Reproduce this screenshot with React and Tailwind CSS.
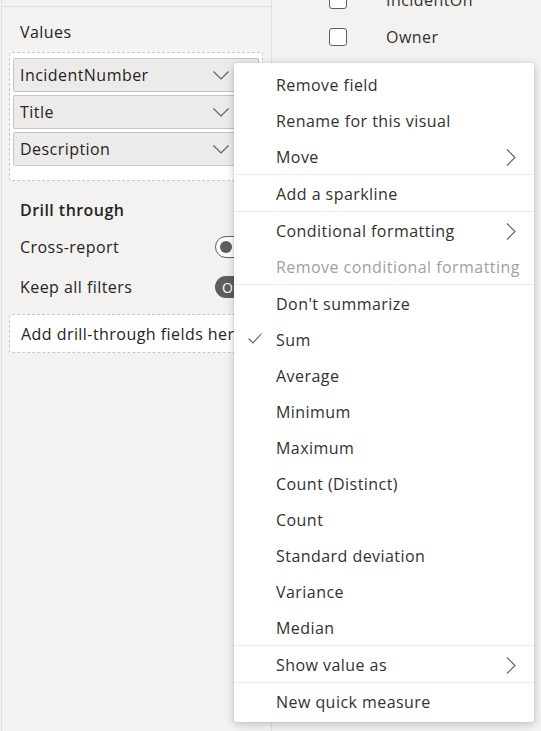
import { Fragment } from 'react'

const font = { fontFamily: '"Open Sans", "Noto Sans", sans-serif' }

const menuGroups = [
  [
    { label: 'Remove field' },
    { label: 'Rename for this visual' },
    { label: 'Move', sub: true },
  ],
  [{ label: 'Add a sparkline' }],
  [
    { label: 'Conditional formatting', sub: true },
    { label: 'Remove conditional formatting', disabled: true },
  ],
  [
    { label: "Don't summarize" },
    { label: 'Sum', checked: true },
    { label: 'Average' },
    { label: 'Minimum' },
    { label: 'Maximum' },
    { label: 'Count (Distinct)' },
    { label: 'Count' },
    { label: 'Standard deviation' },
    { label: 'Variance' },
    { label: 'Median' },
  ],
  [{ label: 'Show value as', sub: true }],
  [{ label: 'New quick measure' }],
]

function ChevronDown() {
  return (
    <svg width="16" height="9" viewBox="0 0 16 9" fill="none">
      <path d="M0.5 0.5 L8 8 L15.5 0.5" stroke="#605e5c" strokeWidth="1.1" />
    </svg>
  )
}

function ChevronRight() {
  return (
    <svg width="10" height="17" viewBox="0 0 10 17" fill="none">
      <path d="M1 0.5 L9 8.5 L1 16.5" stroke="#605e5c" strokeWidth="1.1" />
    </svg>
  )
}

function Check() {
  return (
    <svg width="14" height="11" viewBox="0 0 14 11" fill="none">
      <path d="M0.5 5.5 L5 10 L13.5 0.5" stroke="#605e5c" strokeWidth="1.1" />
    </svg>
  )
}

function FieldPill({ name }) {
  return (
    <div className="flex h-[34px] items-center justify-between rounded-[2px] border border-[#c8c6c4] bg-[#edebe9] pl-[6px] pr-[29px] text-[16px] text-[#252423]">
      <span>{name}</span>
      <ChevronDown />
    </div>
  )
}

function ContextMenu() {
  return (
    <div className="absolute left-[234px] top-[63px] w-[300px] rounded-[3px] bg-white py-[3px] shadow-[0_2px_8px_rgba(0,0,0,0.22),0_0_2px_rgba(0,0,0,0.12)]">
      {menuGroups.map((group, gi) => (
        <Fragment key={gi}>
          {gi > 0 && <div className="h-px bg-[#edebe9]" />}
          {group.map((item) => (
            <div
              key={item.label}
              className={`relative flex h-[36px] items-center pl-[42px] pr-[18px] pt-[2px] text-[16px] ${
                item.disabled ? 'text-[#a19f9d]' : 'text-[#323130]'
              }`}
            >
              {item.checked && (
                <span className="absolute left-[14px] top-[12px]">
                  <Check />
                </span>
              )}
              <span className="flex-1 whitespace-nowrap">{item.label}</span>
              {item.sub && <ChevronRight />}
            </div>
          ))}
        </Fragment>
      ))}
    </div>
  )
}

export default function App() {
  return (
    <div style={font} className="relative flex h-[731px] w-[541px] overflow-hidden bg-[#f3f2f1] tracking-[0.45px]">
      {/* fields pane */}
      <div className="ml-px flex w-[271px] flex-col border-l border-r border-[#e1dfdd]">
        <div className="h-[7px] border-b border-[#e1dfdd]" />
        <div className="pl-[18px] pt-[14px] text-[16px] leading-[22px] text-[#252423]">Values</div>
        <div className="ml-[7px] mr-[8px] mt-[9px] flex flex-col gap-[3px] rounded-[3px] border border-dashed border-[#c8c6c4] bg-white px-[3px] pb-[14px] pt-[5px]">
          <FieldPill name="IncidentNumber" />
          <FieldPill name="Title" />
          <FieldPill name="Description" />
        </div>

        <div className="pl-[18px] pt-[18px] text-[16px] font-semibold leading-[22px] text-[#252423]">Drill through</div>
        <div className="mt-[15px] flex h-[22px] items-center justify-between pl-[18px] pr-[8px] text-[16px] text-[#252423]">
          <span>Cross-report</span>
          <div className="flex h-[22px] w-[48px] items-center rounded-full border border-[#605e5c] bg-white pl-[4px]">
            <div className="h-[12px] w-[12px] rounded-full bg-[#605e5c]" />
          </div>
        </div>
        <div className="mt-[18px] flex h-[22px] items-center justify-between pl-[18px] pr-[8px] text-[16px] text-[#252423]">
          <span>Keep all filters</span>
          <div className="flex h-[22px] w-[48px] items-center rounded-full bg-[#605e5c] pl-[7px] text-[14px] text-white">On</div>
        </div>
        <div className="ml-[7px] mr-[-20px] mt-[16px] flex h-[39px] items-center rounded-[3px] border border-dashed border-[#c8c6c4] bg-white pl-[11px] text-[16px] whitespace-nowrap text-[#252423]">
          Add drill-through fields here
        </div>
      </div>

      {/* table pane */}
      <div className="flex flex-1 flex-col pl-[57px]">
        <div className="mt-[-9px] flex h-[18px] items-center gap-[39px] text-[16px] text-[#323130]">
          <div className="h-[18px] w-[18px] rounded-[3px] border border-[#605e5c] bg-white" />
          <span>IncidentOn</span>
        </div>
        <div className="mt-[19px] flex h-[18px] items-center gap-[39px] text-[16px] text-[#323130]">
          <div className="h-[18px] w-[18px] rounded-[3px] border border-[#605e5c] bg-white" />
          <span>Owner</span>
        </div>
      </div>

      <ContextMenu />
    </div>
  )
}
